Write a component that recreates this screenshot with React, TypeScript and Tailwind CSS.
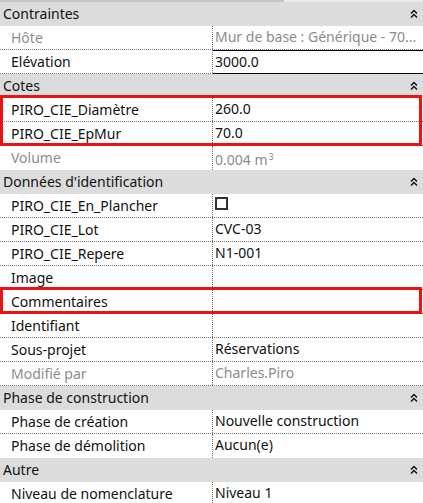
import React from "react";

type Row = {
  label: string;
  value?: React.ReactNode;
  dim?: boolean;
  noLine?: boolean;
  editing?: boolean;
};

type Group = {
  title: string;
  rows: Row[];
  // indexes of rows wrapped in a red highlight box
  marks?: number[][];
};

const GROUPS: Group[] = [
  {
    title: "Contraintes",
    rows: [
      { label: "Hôte", value: "Mur de base : Générique - 70...", dim: true },
      { label: "Elévation", value: "3000.0", editing: true },
    ],
  },
  {
    title: "Cotes",
    rows: [
      { label: "PIRO_CIE_Diamètre", value: "260.0" },
      { label: "PIRO_CIE_EpMur", value: "70.0" },
      {
        label: "Volume",
        value: (
          <>
            0.004 m<span className="text-[9px] align-[5px] ml-px">3</span>
          </>
        ),
        dim: true,
        noLine: true,
      },
    ],
    marks: [[0, 1]],
  },
  {
    title: "Données d'identification",
    rows: [
      {
        label: "PIRO_CIE_En_Plancher",
        value: <span className="inline-block w-[13px] h-[13px] border-2 border-[#333] mt-[2px]" />,
      },
      { label: "PIRO_CIE_Lot", value: "CVC-03" },
      { label: "PIRO_CIE_Repere", value: "N1-001" },
      { label: "Image" },
      { label: "Commentaires" },
      { label: "Identifiant" },
      { label: "Sous-projet", value: "Réservations" },
      { label: "Modifié par", value: "Charles.Piro", dim: true },
    ],
    marks: [[4]],
  },
  {
    title: "Phase de construction",
    rows: [
      { label: "Phase de création", value: "Nouvelle construction" },
      { label: "Phase de démolition", value: "Aucun(e)", noLine: true },
    ],
  },
  {
    title: "Autre",
    rows: [{ label: "Niveau de nomenclature", value: "Niveau 1" }],
  },
];

function Collapse() {
  return (
    <svg width="8" height="10" viewBox="0 0 8 10" fill="none" stroke="#111" strokeWidth="1.4">
      <polyline points="1,4.5 4,1.5 7,4.5" />
      <polyline points="1,8.5 4,5.5 7,8.5" />
    </svg>
  );
}

function PropRow({ row }: { row: Row }) {
  const txt = row.dim ? "text-[#8c8c8c]" : "text-[#111]";
  return (
    <div
      className={`grid grid-cols-[213px_1fr] h-6 bg-white ${
        row.noLine ? "" : "border-b border-dotted border-[#777]"
      }`}
    >
      <div className={`pl-[11px] border-r border-dotted border-[#777] leading-[23px] ${txt}`}>
        {row.label}
      </div>
      <div
        className={`pl-[2px] leading-[22px] whitespace-nowrap overflow-hidden ${txt} ${
          row.editing ? "border-t border-b border-black -mb-px" : ""
        }`}
      >
        {row.value}
      </div>
    </div>
  );
}

function Section({ group }: { group: Group }) {
  const marked = new Set((group.marks ?? []).flat());
  const out: React.ReactNode[] = [];
  let i = 0;
  while (i < group.rows.length) {
    const mark = (group.marks ?? []).find((m) => m[0] === i);
    if (mark) {
      out.push(
        <div key={i} className="relative">
          {mark.map((j) => (
            <PropRow key={j} row={group.rows[j]} />
          ))}
          <div className="absolute -top-[3px] bottom-0 left-0 right-[1px] border-[3px] border-[#ee1111] pointer-events-none" />
        </div>
      );
      i += mark.length;
    } else {
      if (!marked.has(i)) out.push(<PropRow key={i} row={group.rows[i]} />);
      i++;
    }
  }

  return (
    <div>
      <div className="flex items-center justify-between h-6 bg-[#dcdcdc] pl-[3px] pr-[5px] text-[#111] leading-6">
        <span>{group.title}</span>
        <Collapse />
      </div>
      {out}
    </div>
  );
}

export default function App() {
  return (
    <div
      className="w-[423px] h-[503px] overflow-hidden bg-white text-[14px]"
      style={{ fontFamily: '"Noto Sans", "Open Sans", sans-serif' }}
    >
      {/* scroll strip on top */}
      <div className="flex h-[2px] bg-[#ececec]">
        <div className="w-[284px] bg-[#c4c4c4]" />
      </div>
      {GROUPS.map((g) => (
        <Section key={g.title} group={g} />
      ))}
    </div>
  );
}
